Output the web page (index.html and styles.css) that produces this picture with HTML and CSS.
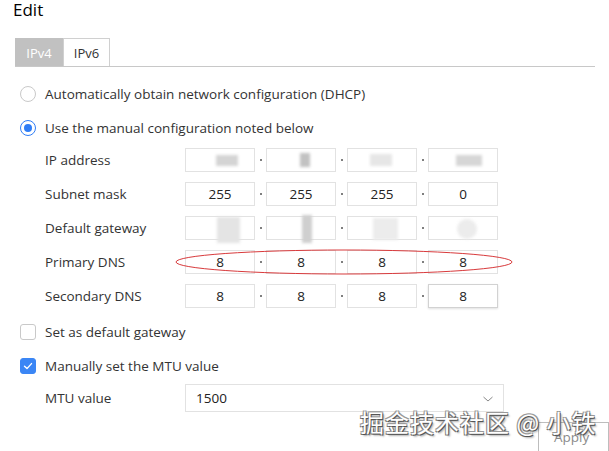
FILE: index.html
```html
<!DOCTYPE html>
<html>
<head>
<meta charset="utf-8">
<link rel="stylesheet" href="styles.css">
</head>
<body>
<div class="page">
  <h1 class="title">Edit</h1>
  <div class="tabs">
    <div class="tab active">IPv4</div>
    <div class="tab">IPv6</div>
  </div>
  <div class="form">
    <div class="opt"><span class="radio"></span><span>Automatically obtain network configuration (DHCP)</span></div>
    <div class="opt"><span class="radio on"></span><span>Use the manual configuration noted below</span></div>

    <div class="field first">
      <span class="label">IP address</span>
      <div class="ip">
        <div class="box"><span class="blur b-ip1"></span></div><span class="dot"></span>
        <div class="box"><span class="blur b-ip2"></span></div><span class="dot"></span>
        <div class="box"><span class="blur b-ip3"></span></div><span class="dot"></span>
        <div class="box"><span class="blur b-ip4"></span></div>
      </div>
    </div>
    <div class="field">
      <span class="label">Subnet mask</span>
      <div class="ip">
        <div class="box">255</div><span class="dot"></span>
        <div class="box">255</div><span class="dot"></span>
        <div class="box">255</div><span class="dot"></span>
        <div class="box">0</div>
      </div>
    </div>
    <div class="field">
      <span class="label">Default gateway</span>
      <div class="ip">
        <div class="box"><span class="blur b-gw1"></span></div><span class="dot"></span>
        <div class="box"><span class="blur b-gw2"></span></div><span class="dot"></span>
        <div class="box"><span class="blur b-gw3"></span></div><span class="dot"></span>
        <div class="box"><span class="blur b-gw4"></span></div>
      </div>
    </div>
    <div class="field">
      <span class="label">Primary DNS</span>
      <div class="ip">
        <div class="box">8</div><span class="dot"></span>
        <div class="box">8</div><span class="dot"></span>
        <div class="box">8</div><span class="dot"></span>
        <div class="box">8</div>
      </div>
    </div>
    <div class="field">
      <span class="label">Secondary DNS</span>
      <div class="ip">
        <div class="box">8</div><span class="dot"></span>
        <div class="box">8</div><span class="dot"></span>
        <div class="box">8</div><span class="dot"></span>
        <div class="box focus">8</div>
      </div>
    </div>

    <div class="opt check-first"><span class="check"></span><span>Set as default gateway</span></div>
    <div class="opt"><span class="check on"><svg viewBox="0 0 16 16" width="16" height="16"><path d="M4.5 8.2 L7 10.6 L11.5 5.6" fill="none" stroke="#fff" stroke-width="1.4" stroke-linecap="round" stroke-linejoin="round"/></svg></span><span>Manually set the MTU value</span></div>
    <div class="field mtu">
      <span class="label">MTU value</span>
      <div class="select"><span>1500</span><svg class="chev" viewBox="0 0 12 8" width="12" height="8"><path d="M1.5 2 L6 6 L10.5 2" fill="none" stroke="#888" stroke-width="1"/></svg></div>
    </div>
  </div>
  <div class="footer"><button class="apply">Apply</button></div>

  <svg class="ellipse" width="345" height="30" viewBox="0 0 345 30"><ellipse cx="169" cy="13" rx="168" ry="12" fill="none" stroke="#d83a3c" stroke-width="1"/></svg>
  <div class="watermark">掘金技术社区 @ 小铁</div>
</div>
</body>
</html>
```
FILE: styles.css
```css
html, body {
  margin: 0;
  padding: 0;
  background: #fff;
  overflow: hidden;
}
.page {
  position: relative;
  width: 609px;
  height: 451px;
  font-family: "Open Sans", "Noto Sans", sans-serif;
  font-size: 13.5px;
  color: #333;
}
.title {
  margin: 0;
  padding-left: 13px;
  font-size: 17px;
  font-weight: 500;
  line-height: 20px;
  color: #000;
  height: 38px;
}
.tabs {
  display: flex;
  margin-left: 15px;
  width: 580px;
  border-bottom: 1px solid #c8c8c8;
  height: 28px;
}
.tab {
  width: 47px;
  height: 28px;
  box-sizing: border-box;
  display: flex;
  align-items: center;
  justify-content: center;
  border: 1px solid #d0d0d0;
  border-bottom: none;
  font-size: 13px;
  color: #333;
  background: #fff;
}
.tab.active {
  width: 48px;
  background: #c1c1c1;
  border-color: #c1c1c1;
  color: #fff;
}
.form {
  display: flex;
  flex-direction: column;
  margin-top: 10px;
  padding-left: 20px;
}
.opt {
  display: flex;
  align-items: center;
  height: 34px;
}
.radio {
  width: 16px;
  height: 16px;
  box-sizing: border-box;
  border: 1px solid #c9c9c9;
  border-radius: 50%;
  margin-right: 9px;
  display: flex;
  align-items: center;
  justify-content: center;
  background: #fff;
}
.radio.on {
  border: 1.5px solid #2f7df6;
}
.radio.on::after {
  content: "";
  width: 8px;
  height: 8px;
  border-radius: 50%;
  background: #2f7df6;
}
.check {
  width: 16px;
  height: 16px;
  box-sizing: border-box;
  border: 1px solid #c9c9c9;
  border-radius: 3px;
  margin-right: 9px;
  display: flex;
}
.check.on {
  background: #3b86f5;
  border-color: #3b86f5;
}
.check.on svg {
  margin: -1px;
}
.check-first {
  margin-top: 2px;
}
.field {
  display: flex;
  align-items: center;
  height: 34px;
  padding-left: 25px;
}
.field.first {
  margin-top: -2px;
}
.label {
  width: 140px;
}
.ip {
  display: flex;
  align-items: center;
}
.box {
  position: relative;
  width: 70px;
  height: 24px;
  box-sizing: border-box;
  border: 1px solid #e2e2e2;
  display: flex;
  align-items: center;
  justify-content: center;
  font-size: 13.5px;
  color: #222;
  overflow: visible;
}
.box.focus {
  border-color: #d2d2d2;
  box-shadow: 0 1px 2px rgba(0,0,0,0.12);
}
.dot {
  width: 2px;
  height: 2px;
  background: #555;
  margin: 0 4.5px;
  border-radius: 1px;
}
.blur {
  position: absolute;
  filter: blur(1.5px);
}
.b-ip1 { left: 30px; top: 6px; width: 22px; height: 11px; background: #d4d4d4; }
.b-ip2 { left: 33px; top: 4px; width: 10px; height: 14px; background: #c2c2c2; }
.b-ip3 { left: 22px; top: 5px; width: 22px; height: 12px; background: #e6e6e6; }
.b-ip4 { left: 27px; top: 6px; width: 26px; height: 11px; background: #d6d6d6; }
.b-gw1 { left: 31px; top: 0px; width: 23px; height: 26px; background: #e4e4e4; }
.b-gw2 { left: 35px; top: -2px; width: 10px; height: 28px; background: #cfcfcf; }
.b-gw3 { left: 25px; top: 1px; width: 25px; height: 22px; background: #ececec; }
.b-gw4 { left: 28px; top: 2px; width: 20px; height: 20px; background: #ececec; border-radius: 50%; }
.field.mtu {
  height: 30px;
}
.select {
  width: 319px;
  height: 28px;
  box-sizing: border-box;
  border: 1px solid #e2e2e2;
  display: flex;
  align-items: center;
  justify-content: space-between;
  padding: 0 9px 0 10px;
  color: #222;
}
.chev {
  margin-top: 1px;
}
.footer {
  display: flex;
  padding-left: 538px;
  margin-top: 9px;
}
.apply {
  width: 90px;
  height: 30px;
  border: 1px solid #bdbdbd;
  background: #fff;
  font-family: "Open Sans", sans-serif;
  font-size: 13.5px;
  color: #8a8a8a;
  text-align: left;
  padding: 0 0 0 15px;
}
.ellipse {
  position: absolute;
  left: 175px;
  top: 249px;
}
.watermark {
  position: absolute;
  left: 360px;
  top: 407px;
  font-family: "Noto Sans CJK SC", sans-serif;
  font-size: 24px;
  line-height: 30px;
  color: #fff;
  letter-spacing: 1px;
  text-shadow: 1px 1px 0 #555, -1px -1px 0 #999, 1px -1px 0 #999, -1px 1px 0 #777, 2px 2px 2px rgba(0,0,0,0.35);
}
```
